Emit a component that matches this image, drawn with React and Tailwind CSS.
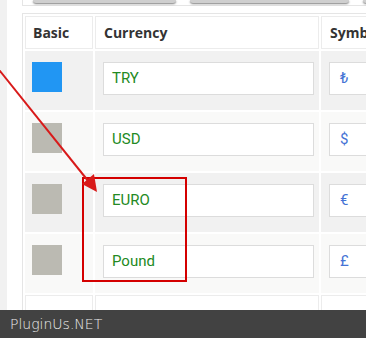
const rows = [
  { color: 'bg-[#2196f3]', name: 'TRY', symbol: '₺', bg: 'bg-[#f1f1f1]' },
  { color: 'bg-[#bbbab2]', name: 'USD', symbol: '$', bg: 'bg-[#f9f9f8]' },
  { color: 'bg-[#bbbab2]', name: 'EURO', symbol: '€', bg: 'bg-[#f1f1f1]' },
  { color: 'bg-[#bbbab2]', name: 'Pound', symbol: '£', bg: 'bg-[#f9f9f8]' },
];

const App = () => {
  return (
    <div className="relative w-[366px] h-[338px] overflow-hidden bg-white flex font-['Open_Sans',sans-serif]">
      <div className="w-[7px] shrink-0 bg-[#f1f1f1]" />
      <div className="flex-1 pl-[15px] overflow-hidden">
        {/* top toolbar edge */}
        <div className="h-[6px] border-l border-b border-[#e5e5e5] flex gap-[14px] pl-[10px] w-[400px]">
          <div className="w-[145px] h-[3px] bg-[#cfcfcf] rounded-b-[3px] shadow-[0_1px_2px_rgba(0,0,0,0.5)]" />
          <div className="w-[160px] h-[3px] bg-[#cfcfcf] rounded-b-[3px] shadow-[0_1px_2px_rgba(0,0,0,0.5)]" />
          <div className="w-[60px] h-[3px] bg-[#cfcfcf] rounded-b-[3px] shadow-[0_1px_2px_rgba(0,0,0,0.5)]" />
        </div>

        <table className="mt-[7px] table-fixed border-separate border-spacing-[2px] border border-[#e5e5e5] w-[422px]">
          <thead>
            <tr>
              <th className="w-[68px] h-[33px] border border-[#ececec] bg-white text-left pl-[7px] text-[14px] font-bold text-[#333]">Basic</th>
              <th className="w-[224px] h-[33px] border border-[#ececec] bg-white text-left pl-[8px] text-[14px] font-bold text-[#333]">Currency</th>
              <th className="w-[120px] h-[33px] border border-[#ececec] bg-white text-left pl-[8px] text-[14px] font-bold text-[#333] whitespace-nowrap">Symbol</th>
            </tr>
          </thead>
          <tbody>
            {rows.map(r => (
              <tr key={r.name}>
                <td className={`h-[59px] align-top pt-[11px] pl-[7px] ${r.bg}`}>
                  <div className={`w-[30px] h-[30px] ${r.color}`} />
                </td>
                <td className={`h-[59px] align-top pt-[11px] pl-[8px] ${r.bg}`}>
                  <div className="w-[211px] h-[33px] bg-white border border-[#dcdcdc] flex items-center pl-[8px] font-['Roboto',sans-serif] text-[15px] text-[#238a23]">
                    {r.name}
                  </div>
                </td>
                <td className={`h-[59px] align-top pt-[11px] pl-[8px] ${r.bg}`}>
                  <div className="w-[120px] h-[33px] bg-white border border-[#dcdcdc] flex items-center pl-[10px] font-['Roboto',sans-serif] text-[15px] text-[#4573d5]">
                    {r.symbol}
                  </div>
                </td>
              </tr>
            ))}
            <tr>
              <td className="h-[40px] border border-[#ececec] bg-white" />
              <td className="h-[40px] border border-[#ececec] bg-white" />
              <td className="h-[40px] border border-[#ececec] bg-white" />
            </tr>
          </tbody>
        </table>
      </div>

      {/* annotation: red box + arrow */}
      <div className="absolute left-[82px] top-[177px] w-[105px] h-[105px] border-2 border-[#d40000]" />
      <svg className="absolute left-0 top-0" width="366" height="338" viewBox="0 0 366 338">
        <line x1="-4" y1="66" x2="89" y2="182" stroke="#d81a1a" strokeWidth="2" />
        <polygon points="97,192 82,184 94,174" fill="#d81a1a" />
      </svg>

      {/* watermark bar */}
      <div className="absolute left-0 right-0 bottom-0 h-[28px] bg-[#424242] flex items-center pl-[10px]">
        <span className="font-['DejaVu_Sans',sans-serif] text-[14px] font-light text-[#ececec]">PluginUs.NET</span>
      </div>
    </div>
  );
};

export default App;
